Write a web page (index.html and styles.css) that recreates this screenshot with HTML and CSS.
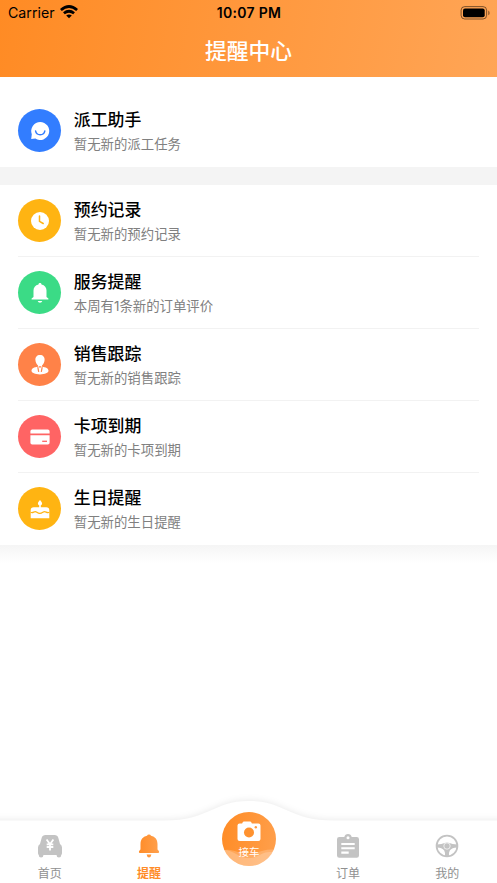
FILE: index.html
```html
<!DOCTYPE html>
<html lang="zh-CN">
<head>
<meta charset="utf-8">
<title>提醒中心</title>
<link rel="stylesheet" href="styles.css">
</head>
<body>
<div class="app">
  <header class="header">
    <div class="status">
      <div class="carrier"><span>Carrier</span>
        <svg width="18" height="14" viewBox="0 0 18 14" fill="none" stroke="#000" stroke-width="2.700"><path d="M.9 5Q9-2 17.100 5"/><path d="M3.900 8.300Q9 4.200 14.100 8.300"/><path d="M9 13.200 6.200 10.500Q9 8.400 11.800 10.500Z" fill="#000" stroke="none"/></svg>
      </div>
      <div class="time">10:07 PM</div>
      <div class="battery"><svg width="30" height="14" viewBox="0 0 30 14"><rect x="1.100" y=".6" width="25.500" height="12.400" rx="3.600" fill="none" stroke="#000" stroke-opacity=".5"/><rect x="3" y="2.500" width="21.700" height="8.700" rx="2"/><path d="M28.300 4.500q1.300.7 1.300 2.400t-1.300 2.300z" opacity=".5"/></svg></div>
    </div>
    <h1 class="title">提醒中心</h1>
  </header>
  <main class="content">
    <section class="group first">
      <div class="row">
        <div class="badge blue"><svg viewBox="0 0 20 20"><path fill="#fff" d="M10.200 1a9 9 0 1 1-4.800 16.600L1.200 18l.6-4.800A9 9 0 0 1 10.200 1z"/><path d="M5.600 10c.8 5 8.400 5 9.200 0" fill="none" stroke="#327dff" stroke-width="1.500" stroke-linecap="round"/></svg></div>
        <div class="copy"><h2>派工助手</h2><p>暂无新的派工任务</p></div>
      </div>
    </section>
    <section class="group">
      <div class="row">
        <div class="badge amber"><svg viewBox="0 0 20 20"><circle cx="10" cy="10" r="9" fill="#fff"/><path d="M9.500 5v5.300l3.700 2.200" fill="none" stroke="#ffb412" stroke-width="1.500" stroke-linecap="round"/></svg></div>
        <div class="copy"><h2>预约记录</h2><p>暂无新的预约记录</p></div>
      </div>
      <div class="row">
        <div class="badge green"><svg viewBox="0 0 20 20" fill="#fff"><path d="M10 0c.9 0 1.500.6 1.500 1.400 3.300.7 5 3.100 5 6.100V14l1.900 1.400v1.200H1.600v-1.200L3.500 14V7.500c0-3 1.700-5.400 5-6.100C8.500.6 9.100 0 10 0zM7.700 18h4.600a2.400 2.400 0 0 1-4.600 0z"/></svg></div>
        <div class="copy"><h2>服务提醒</h2><p>本周有<span class="numeric">1</span>条新的订单评价</p></div>
      </div>
      <div class="row">
        <div class="badge orange"><svg viewBox="0 0 20 20"><path d="M10 .1c3 0 4.800 2.100 4.600 5-.2 2.500-1.300 4.300-2.600 5.400v1.200c3.900.3 6.500 1.800 6.500 4.100 0 2-3.600 3.600-8.500 3.600s-8.500-1.600-8.500-3.600c0-2.300 2.600-3.800 6.500-4.100v-1.200C6.700 9.400 5.600 7.600 5.400 5.100 5.200 2.200 7 .1 10 .1z" fill="#fff"/><path d="M7.800 12.200 8.700 16.800M12.200 12.200 11.300 16.800" stroke="#ff8248" stroke-width="1.200" fill="none"/><path d="M8.300 11.200h3.400L10 12.900z" fill="#ff8248"/></svg></div>
        <div class="copy"><h2>销售跟踪</h2><p>暂无新的销售跟踪</p></div>
      </div>
      <div class="row">
        <div class="badge red"><svg viewBox="0 0 20 20"><path fill="#fff" d="M2.200 2.500h15.600q1.800 0 1.800 1.800V6.500H.4V4.300Q.4 2.500 2.200 2.500zM.4 8.300h19.200v7.400q0 1.800-1.800 1.800H2.200Q.4 17.500.4 15.700z"/><path stroke="#ff6464" stroke-width="1.300" d="M12.200 14.300h4.800"/></svg></div>
        <div class="copy"><h2>卡项到期</h2><p>暂无新的卡项到期</p></div>
      </div>
      <div class="row">
        <div class="badge amber"><svg viewBox="0 0 20 20"><path fill="#fff" d="M10 .9c1.300 1.500 2.100 2.600 2.100 3.500a2.100 2.100 0 0 1-4.200 0C7.900 3.500 8.700 2.400 10 .9zM9.200 6h1.600v2.200h5.500q3 0 3 3v8.100H.7v-8.100q0-3 3-3h5.500z"/><path d="M.7 13.300c2 1.100 3-.7 4.500-.7 1.600 0 2 1.800 4.600 1.800s3.200-1.800 4.800-1.800c1.500 0 2.600 1.800 4.700.7" fill="none" stroke="#ffb412" stroke-width="1.200"/></svg></div>
        <div class="copy"><h2>生日提醒</h2><p>暂无新的生日提醒</p></div>
      </div>
    </section>
    <div class="fade"></div>
  </main>
  <nav class="tabbar">
    <svg class="tab-shape" width="497" height="93" viewBox="0 0 497 93"><path class="tab-surface" d="M-20 30.500H165C209 30.500 213 11 249 11S289 30.500 333 30.500H517V110H-20z"/></svg>
    <div class="tab"><svg class="tab-icon" viewBox="0 0 26 26"><path fill="#c3c3c3" d="M8.500 2h9q3 0 3.800 2.800L23 11q2 1.200 2 3.600V20q0 1.500-.8 2v.2a2.300 2.300 0 0 1-4.600 0V22H6.400v.2a2.300 2.300 0 0 1-4.600 0V22Q1 21.500 1 20v-5.400Q1 12.200 3 11l1.700-6.200Q5.500 2 8.500 2z"/><path stroke="#fff" stroke-width="1.800" fill="none" d="m9.600 6.500 3.400 4.700 3.400-4.700M9.700 11.300h6.600M9.700 14h6.600M13 11v6.500"/></svg><span>首页</span></div>
    <div class="tab active"><svg class="tab-icon" viewBox="0 0 26 26"><defs><linearGradient id="bell"><stop stop-color="#ff8c28"/><stop offset="1" stop-color="#ffa04d"/></linearGradient></defs><path fill="url(#bell)" d="M13 1.500q1.500 0 2 1.300c4.300.9 6.500 4 6.500 8.200v5q0 .8.700 1.300.9.700.9 1.600 0 1-1.100 1H4q-1.100 0-1.100-1 0-.9.900-1.600.7-.5.7-1.300v-5c0-4.200 2.200-7.300 6.500-8.200q.5-1.300 2-1.300zM10.600 21.600h4.800q-.4 2.800-2.400 2.800t-2.400-2.800z"/></svg><span>提醒</span></div>
    <div class="tab center"><div class="action">
      <svg class="wave" viewBox="0 0 54 54"><path d="M0 39C9 35 16 42 25 42S44 36 54 38V54H0z" fill="#fff" opacity=".2"/><path d="M0 38C11 37 16 46 27 46S41 37 54 41V54H0z" fill="#fff" opacity=".2"/></svg>
      <svg class="camera" viewBox="0 0 24 21"><path fill="#fff" d="M7 .5h6q1 0 1.400 1l.5 1h6.500q2.100 0 2.100 2.100v13.300q0 2.100-2.100 2.100H2.600Q.5 20 .5 17.900V4.600q0-2.100 2.100-2.100h2.500l.5-1Q6 .5 7 .5z"/><circle cx="12" cy="11.500" r="5" fill="#ff922f"/><circle cx="18.800" cy="6.200" r="1.200" fill="#ff9a42"/></svg><span>接车</span></div></div>
    <div class="tab"><svg class="tab-icon" viewBox="0 0 26 26"><path fill="#c3c3c3" d="M4.300 4h5a3.800 3.800 0 0 1 7.400 0h5q2.300 0 2.300 2.200v16.300q0 2.200-2.300 2.200H4.300Q2 24.700 2 22.500V6.200Q2 4 4.300 4z"/><circle cx="13" cy="4.700" r="1.500" fill="#fff"/><path stroke="#fff" stroke-width="2.100" d="M6.300 11H19.700M6.300 15.200H19.700M6.300 19.600H13.700"/></svg><span>订单</span></div>
    <div class="tab"><svg class="tab-icon" viewBox="0 0 26 26"><circle cx="13" cy="13" r="10.400" fill="none" stroke="#c3c3c3" stroke-width="1.800"/><path fill="#c3c3c3" d="M3 11.500q5-.2 7.500-1.600 2.500-.7 5 0 2.500 1.400 7.500 1.600v3q-5 .2-7.200 3-1 1.500-.8 5.500h-4q.2-4-.8-5.500-2.200-2.800-7.200-3z"/><circle cx="13" cy="13" r="3.200" fill="#c3c3c3" stroke="#fff" stroke-width=".7"/></svg><span>我的</span></div>
  </nav>
</div>
</body>
</html>
```
FILE: styles.css
```css
* { box-sizing: border-box; }
body { margin: 0; background: #fff; font-family: "Noto Sans CJK SC", sans-serif; }
h1, h2, p { margin: 0; }
svg { display: block; flex: none; }
.app { width: 497px; height: 883px; display: flex; flex-direction: column; overflow: hidden; }
.header { height: 77px; flex: none; background: linear-gradient(100deg, #ff8b24, #ffa556); }
.status { height: 25px; padding: 0 7px 0 8px; display: grid; grid-template-columns: 1fr auto 1fr; align-items: center; font: 14.200px/25px Inter, sans-serif; color: #000; }
.carrier { display: flex; align-items: center; gap: 5px; }
.carrier svg { margin-top: -2px; }
.carrier span { margin-top: -1px; }
.time { font-weight: 600; font-size: 14px; letter-spacing: .3px; margin-top: -1px; }
.battery { display: flex; justify-content: flex-end; }
.title { font-size: 21.800px; line-height: 49px; font-weight: 500; color: #fff; text-align: center; }
.content { flex: 1; }
.group { padding: 0 18px; }
.first { padding-top: 18px; border-bottom: 18px solid #f4f4f4; }
.row { height: 72px; display: flex; align-items: center; gap: 12.500px; border-bottom: 1px solid #f2f2f2; }
.row:last-child { border-bottom-color: transparent; }
.badge { width: 43px; height: 43px; border-radius: 50%; display: flex; align-items: center; justify-content: center; flex: none; margin-left: .3px; }
.badge svg { width: 20px; height: 20px; }
.blue { background: #327dff; }
.amber { background: #ffb412; }
.green { background: #3bdb86; }
.orange { background: #ff8248; }
.red { background: #ff6464; }
.copy { margin-top: 1px; }
.copy h2 { font-size: 16.900px; line-height: 24px; font-weight: 500; color: #000; }
.copy p { font-size: 13.400px; line-height: 24px; color: #808080; }
.copy .numeric { font-family: Inter, sans-serif; line-height: 0; }
.fade { height: 18px; background: linear-gradient(#f5f5f5, #fff); }
.tabbar { height: 93px; flex: none; display: grid; grid-template-columns: repeat(5, 1fr); position: relative; }
.tab-shape { position: absolute; left: 0; top: 0; overflow: visible; }
.tab-surface { fill: #fff; filter: drop-shadow(0 -1px 3px rgba(0, 0, 0, .08)); }
.tab { position: relative; padding-top: 43px; display: flex; flex-direction: column; align-items: center; color: #909090; font-size: 12px; line-height: 16px; }
.tab-icon { width: 26px; height: 26px; margin-bottom: 6px; }
.active { color: #ff8c28; font-weight: 700; }
.center { padding-top: 21.500px; }
.action { position: relative; width: 54px; height: 54px; margin-left: 1px; border-radius: 50%; overflow: hidden; background: linear-gradient(100deg, #ff8b24, #ffa04d); color: #fff; display: flex; flex-direction: column; align-items: center; padding-top: 9px; font-size: 10.500px; }
.wave { position: absolute; left: 0; top: 0; width: 54px; height: 54px; }
.camera { width: 24px; height: 21px; margin-bottom: 2px; position: relative; }
.action span { position: relative; }
```
